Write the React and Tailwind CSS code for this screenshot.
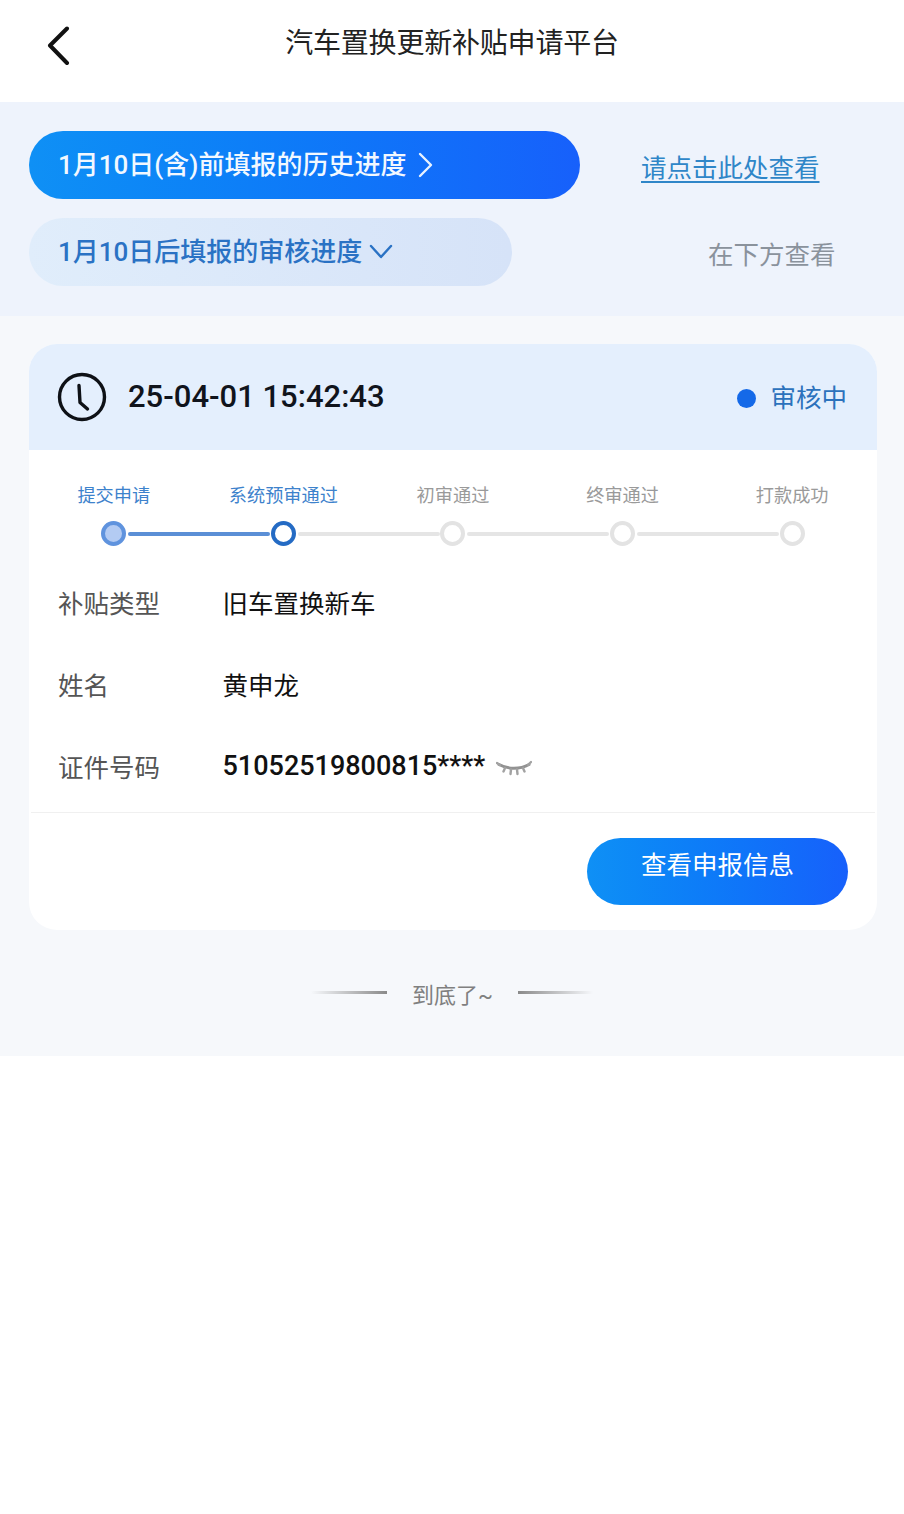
const F = { fontFamily: '"Roboto","Noto Sans CJK SC",sans-serif' };

function Step({ label, state, last }) {
  const labelColor = state === "off" ? "text-[#9a9a9a]" : "text-[#3d82cc]";
  const dot =
    state === "done"
      ? "border-[#5f93de] bg-[#b3cbf3]"
      : state === "current"
        ? "border-[#246bc4] bg-white"
        : "border-[#e3e3e3] bg-white";
  return (
    <div className="relative flex w-[170px] flex-col items-center">
      <div className={`h-[26px] text-[18.2px] leading-[26px] whitespace-nowrap ${labelColor}`}>{label}</div>
      <div className={`mt-[12px] h-[25px] w-[25px] rounded-full border-[4px] ${dot}`} />
      {!last && (
        <div
          className={`absolute top-[49px] left-[99px] h-[4px] w-[142px] rounded-full ${
            state === "done" ? "bg-[#5b8fd6]" : "bg-[#e5e5e5]"
          }`}
        />
      )}
    </div>
  );
}

function Row({ label, children }) {
  return (
    <div className="flex h-[82px] items-center">
      <div className="w-[164.5px] text-[25.5px] text-[#555]">{label}</div>
      {children}
    </div>
  );
}

export default function App() {
  return (
    <div style={F} className="min-h-[1514px] bg-white">
      <header className="relative flex h-[102px] justify-center bg-white pt-[26px]">
        <svg className="absolute top-[26px] left-[46px]" width="26" height="40" viewBox="0 0 26 40" fill="none">
          <path d="M21 2.5 4 19.5 21 37" stroke="#111" strokeWidth="4" strokeLinecap="round" strokeLinejoin="round" />
        </svg>
        <h1 className="text-[28px] leading-[36px] font-normal tracking-[-0.2px] text-[#222]">汽车置换更新补贴申请平台</h1>
      </header>

      <section className="flex h-[214px] flex-col gap-[19px] bg-[#eef3fc] pt-[29px] pl-[29px]">
        <div className="flex items-center">
          <div className="flex h-[68px] w-[551px] items-center rounded-full bg-gradient-to-r from-[#0f90f5] to-[#1760fb] pl-[29px] text-[26px] font-medium text-[#f2f8ff]">
            <span>1月10日(含)前填报的历史进度</span>
            <svg className="ml-[12px]" width="15" height="26" viewBox="0 0 15 26" fill="none">
              <path d="M2 2 13 13 2 24" stroke="#e8f3ff" strokeWidth="2.4" strokeLinecap="round" strokeLinejoin="round" />
            </svg>
          </div>
          <a className="ml-[61px] pt-[6px] text-[25.5px] text-[#2f86c8] underline underline-offset-[4px]">请点击此处查看</a>
        </div>
        <div className="flex items-center">
          <div className="flex h-[68px] w-[483px] items-center rounded-full bg-gradient-to-r from-[#e0edfb] to-[#d6e3f8] pl-[29px] text-[26px] font-medium text-[#2a72c4]">
            <span>1月10日后填报的审核进度</span>
            <svg className="ml-[7px]" width="24" height="16" viewBox="0 0 24 16" fill="none">
              <path d="M2 2 12 13 22 2" stroke="#2a72c4" strokeWidth="2.4" strokeLinecap="round" strokeLinejoin="round" />
            </svg>
          </div>
          <span className="ml-[196px] pt-[6px] text-[25.5px] text-[#8a929c]">在下方查看</span>
        </div>
      </section>

      <main className="h-[740px] bg-[#f6f8fb] px-[29px] pt-[28px]">
        <div className="h-[586px] w-[848px] rounded-[28px] bg-white">
          <div className="flex h-[106px] items-center rounded-t-[28px] bg-[#e4effd] pr-[30px] pl-[28px]">
            <svg width="50" height="50" viewBox="0 0 50 50" fill="none">
              <circle cx="25" cy="25" r="22.5" stroke="#0e1116" strokeWidth="3.4" />
              <path d="M22 13.5 23 30.5 30.5 37" stroke="#0e1116" strokeWidth="3.4" strokeLinecap="round" strokeLinejoin="round" />
            </svg>
            <span className="-mt-[2px] ml-[21px] text-[31px] leading-none font-medium text-[#10141c]">25-04-01 15:42:43</span>
            <span className="mt-[2px] mr-[14px] ml-auto h-[19px] w-[19px] rounded-full bg-[#1469e8]" />
            <span className="mt-[2px] text-[25.5px] text-[#2c72bc]">审核中</span>
          </div>

          <div className="flex pt-[33px]">
            {[
              ["提交申请", "done"],
              ["系统预审通过", "current"],
              ["初审通过", "off"],
              ["终审通过", "off"],
              ["打款成功", "off", true],
            ].map(([l, s, last]) => (
              <Step key={l} label={l} state={s} last={last} />
            ))}
          </div>

          <div className="mt-[17px] px-[29px]">
            <Row label="补贴类型">
              <span className="text-[25.5px] text-[#111]">旧车置换新车</span>
            </Row>
            <Row label="姓名">
              <span className="text-[25.5px] text-[#111]">黄申龙</span>
            </Row>
            <Row label="证件号码">
              <span className="-mt-[4px] text-[27px] font-medium text-[#111]">51052519800815****</span>
              <svg className="ml-[11px]" width="36" height="18" viewBox="0 0 36 18" fill="none">
                <path d="M3 5.5C12 10.5 24 10.5 33 5.5" stroke="#929292" strokeWidth="3" strokeLinecap="round" />
                <path d="M9 9 7.5 12.5M15 10.5 14.5 15M21 10.5 21.5 15M27 9 28.5 12.5M32 6 35 3M4 6 1 4" stroke="#a2a2a2" strokeWidth="2.4" strokeLinecap="round" />
              </svg>
            </Row>
          </div>

          <div className="mx-[2px] mt-[3px] h-px bg-[#f0f0f0]" />

          <div className="flex justify-end pt-[25px] pr-[29px]">
            <button className="flex h-[67px] w-[261px] justify-center rounded-full bg-gradient-to-r from-[#0f90f5] to-[#1760fb] pt-[8px] text-[25.5px] text-white">
              查看申报信息
            </button>
          </div>
        </div>

        <div className="mt-[44px] flex h-[40px] items-center justify-center">
          <span className="-mt-[4px] h-[3px] w-[76px] bg-gradient-to-r from-transparent to-[#8a8a8a]" />
          <span className="mx-[25px] mt-[3px] text-[22px] text-[#808080]">到底了~</span>
          <span className="-mt-[4px] h-[3px] w-[75px] bg-gradient-to-r from-[#8a8a8a] to-transparent" />
        </div>
      </main>
    </div>
  );
}
